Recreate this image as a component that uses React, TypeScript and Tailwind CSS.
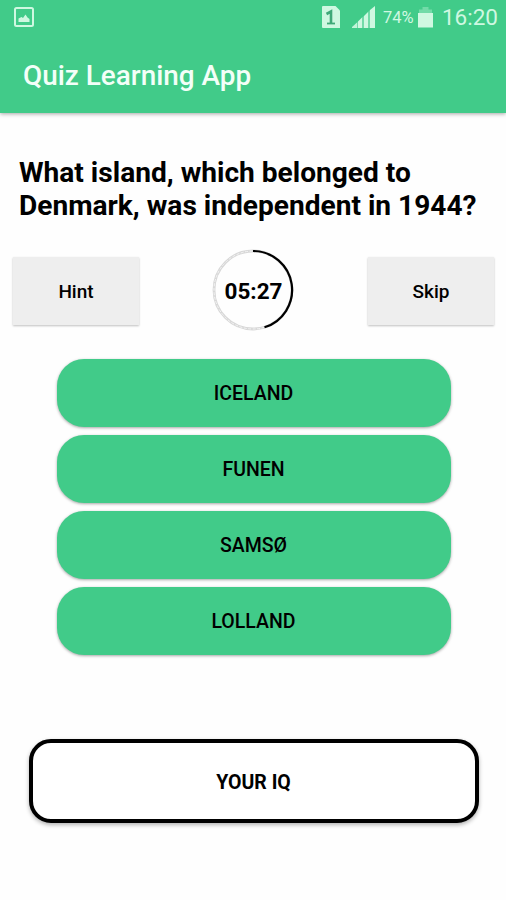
import { useState } from "react";

const answers = ["ICELAND", "FUNEN", "SAMSØ", "LOLLAND"];

function StatusBar() {
  return (
    <div className="flex h-9 items-center justify-between pl-[14px] pr-[8px] text-[#cff8e1]">
      <svg width="20" height="20" viewBox="0 0 20 20" className="-mt-[3px]">
        <rect x="1" y="1" width="18" height="18" rx="1.5" fill="none" stroke="currentColor" strokeWidth="2" />
        <path d="M4.500 15v-3.500l3-1.500 1.500 1L11.500 7.500l2 3 2 1.500v3z" fill="currentColor" />
      </svg>
      <div className="flex items-center">
        <svg width="18" height="22" viewBox="0 0 18 22" className="-mt-[2px] mr-[12px]">
          <path d="M1 0h12.5L18 4.500V22H1a1 1 0 0 1-1-1V1a1 1 0 0 1 1-1z" fill="currentColor" />
          <path d="M4.500 8 9 5.500v12" fill="none" stroke="#3fa978" strokeWidth="2.600" />
          <path d="M5 17.500h8" fill="none" stroke="#3fa978" strokeWidth="1.800" />
        </svg>
        <svg width="23" height="22" viewBox="0 0 23 22" className="-mt-[2px] mr-[8px]" fill="currentColor">
          <path d="M0 22v-1l5-4.500V22z" opacity="0.9" />
          <path d="M6 22v-6.500l4-4V22zM12 22V10l4-4v16zM18 22V4l5-4v22z" />
          <path d="M5 22v-5.500l1-1V22zM10 22V11.500l2-1.500v12zM16 22V6l2-2v18z" opacity="0.35" />
        </svg>
        <span className="mr-[4px] w-[31px] whitespace-nowrap pt-px text-[16.500px]">74%</span>
        <svg width="15" height="22" viewBox="0 0 15 22" className="-mt-px mr-[9px]" fill="currentColor">
          <path d="M4.500 0h6v2.500H14V6H1V2.500h3.500z" opacity="0.35" />
          <path d="M0 6h15v14.500H0z" />
        </svg>
        <span className="text-[22.500px]">16:20</span>
      </div>
    </div>
  );
}

function Timer({ time }: { time: string }) {
  return (
    <div className="relative flex h-[82px] w-[82px] items-center justify-center">
      <svg className="absolute -left-px -top-px" width="82" height="82" viewBox="0 0 82 82" fill="none">
        <circle cx="41" cy="41" r="39" stroke="#d8d8d8" strokeWidth="2.800" />
        <circle cx="41" cy="41" r="39" stroke="#f4f4f4" strokeWidth="1" strokeDasharray="3 1.500" />
        <path d="M41 2a39 39 0 0 1 11.500 76.300" stroke="#000" strokeWidth="2.200" />
      </svg>
      <span className="relative pt-[2px] text-[22.500px] font-bold">{time}</span>
    </div>
  );
}

function FlatButton({ label }: { label: string }) {
  return (
    <button className="h-[68px] w-[126px] bg-[#eeeeee] pt-[3px] text-[19px] font-medium shadow-[0_1px_2px_rgba(0,0,0,0.25)]">
      {label}
    </button>
  );
}

export default function App() {
  const [selected, setSelected] = useState<string | null>(null);

  return (
    <div className="h-[900px] w-[506px] overflow-hidden bg-[#fefefe] font-['Roboto',sans-serif] text-black">
      <header className="h-[113px] bg-[#41cb89] shadow-[0_1px_4px_rgba(0,0,0,0.35)]">
        <StatusBar />
        <h1 className="pl-[23px] pt-[20px] text-[27.900px] font-medium leading-[40px] text-[#f3fff8]">Quiz Learning App</h1>
      </header>

      <main>
        <h2 className="whitespace-nowrap pl-[19px] pt-[43px] text-[28.100px] font-bold leading-[33px]">
          What island, which belonged to
          <br />
          Denmark, was independent in 1944?
        </h2>

        <div className="flex items-center justify-between pl-[13px] pr-[12px] pt-[28px]">
          <FlatButton label="Hint" />
          <Timer time="05:27" />
          <FlatButton label="Skip" />
        </div>

        <div className="flex flex-col items-center gap-2 pl-px pt-[26.500px]">
          {answers.map((answer) => (
            <button
              key={answer}
              onClick={() => setSelected(answer)}
              aria-pressed={selected === answer}
              className="h-[68px] w-[394px] rounded-[27px] bg-[#41cb89] pt-[3px] text-[19.500px] font-medium shadow-[0_1px_3px_rgba(0,0,0,0.35)]"
            >
              {answer}
            </button>
          ))}
        </div>

        <div className="flex justify-center pl-px pt-[84.500px]">
          <button className="h-[84px] w-[450px] rounded-[22px] border-4 border-black bg-white pt-[3px] text-[19.500px] font-bold shadow-[0_2px_4px_rgba(0,0,0,0.3)]">
            YOUR IQ
          </button>
        </div>
      </main>
    </div>
  );
}
